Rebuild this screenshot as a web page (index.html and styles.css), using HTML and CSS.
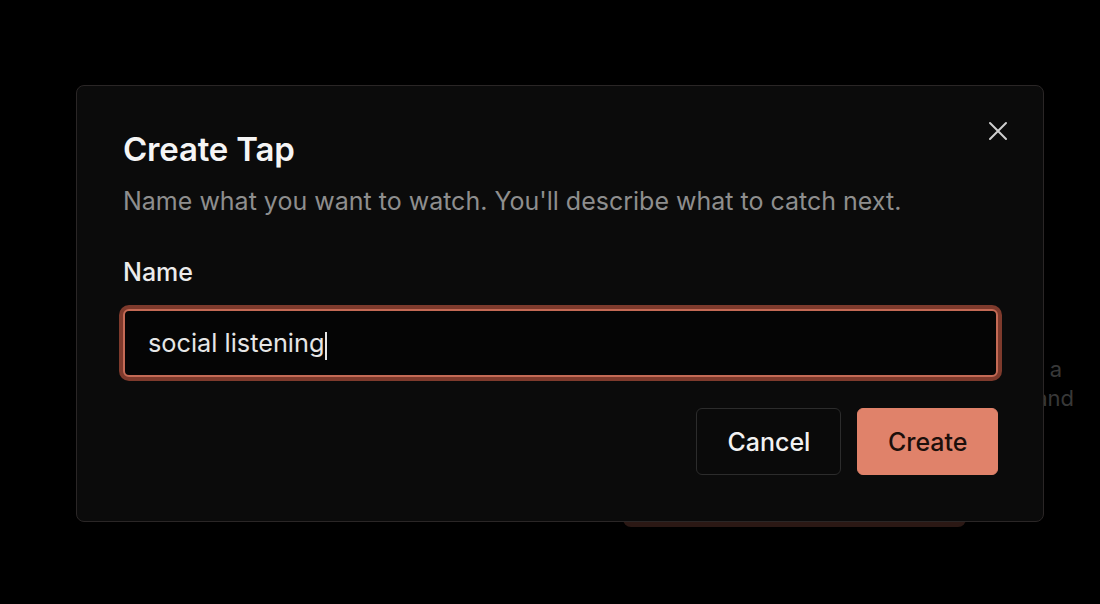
FILE: index.html
```html
<!DOCTYPE html>
<html lang="en">
<head>
<meta charset="utf-8">
<title>Create Tap</title>
<link rel="stylesheet" href="styles.css">
</head>
<body>
<div class="page">
  <div class="bg-col">
    <p class="bg-text"><span class="bg-line bg-line-1">Taps watch sources for you. Create a</span><span class="bg-line bg-line-2">tap to start listening for signals and</span></p>
    <div class="bg-btn"></div>
  </div>

  <div class="backdrop">
    <div class="modal" role="dialog" aria-labelledby="dlg-title">
      <button class="close" aria-label="Close">
        <svg viewBox="0 0 20 20" width="20" height="20" aria-hidden="true">
          <path d="M2 2 L18 18 M18 2 L2 18" stroke="#cfcfcf" stroke-width="2" stroke-linecap="round" fill="none"/>
        </svg>
      </button>
      <h2 class="title" id="dlg-title">Create Tap</h2>
      <p class="subtitle">Name what you want to watch. You'll describe what to catch next.</p>
      <label class="label">Name</label>
      <div class="field"><span class="field-text">social listening</span><span class="caret"></span></div>
      <div class="actions">
        <button class="btn btn-cancel">Cancel</button>
        <button class="btn btn-create">Create</button>
      </div>
    </div>
  </div>
</div>
</body>
</html>
```
FILE: styles.css
```css
* { box-sizing: border-box; }

html, body {
  margin: 0;
  padding: 0;
  background: #000;
}

body {
  font-family: Inter, "Noto Sans", sans-serif;
  -webkit-font-smoothing: antialiased;
}

.page {
  position: relative;
  width: 1100px;
  height: 604px;
  overflow: hidden;
  background: #000;
}

.bg-col {
  margin-left: 620px;
  width: 470px;
  padding-top: 355px;
}

.bg-text {
  margin: 0;
  color: #383838;
  font-size: 22px;
  line-height: 29px;
  white-space: nowrap;
  text-align: right;
}

.bg-line {
  display: block;
}

.bg-line-1 { padding-right: 28px; }
.bg-line-2 { padding-right: 16px; }

.bg-btn {
  margin-top: 59px;
  margin-left: 3px;
  width: 343px;
  height: 55px;
  border-radius: 8px;
  background: #2b1814;
}

.backdrop {
  position: absolute;
  inset: 0;
}

.modal {
  position: absolute;
  left: 76px;
  top: 85px;
  width: 968px;
  height: 437px;
  background: #0b0b0b;
  border: 1px solid #2a2626;
  border-radius: 8px;
  padding: 43px 45px 46px 46px;
  display: flex;
  flex-direction: column;
}

.close {
  position: absolute;
  top: 33px;
  right: 33px;
  width: 24px;
  height: 24px;
  padding: 2px;
  border: 0;
  background: transparent;
  display: flex;
  align-items: center;
  justify-content: center;
}

.title {
  margin: 0;
  color: #f5f5f5;
  font-size: 33px;
  font-weight: 600;
  line-height: 40px;
  letter-spacing: -0.2px;
}

.subtitle {
  margin: 15px 0 0;
  color: #8e8e8e;
  font-size: 25px;
  line-height: 34px;
}

.label {
  margin-top: 39px;
  color: #ececec;
  font-size: 25px;
  font-weight: 500;
  line-height: 30px;
}

.field {
  margin-top: 22px;
  height: 68px;
  background: #050505;
  border: 2px solid #c46a55;
  border-radius: 6px;
  box-shadow: 0 0 0 4px #7e3a2c;
  display: flex;
  align-items: center;
  padding-left: 23px;
}

.field-text {
  color: #e6e6e6;
  font-size: 25.3px;
  line-height: 30px;
}

.caret {
  display: inline-block;
  width: 2px;
  height: 28px;
  margin-left: 1px;
  margin-top: 6px;
  background: #e6e6e6;
}

.actions {
  margin-top: 31px;
  display: flex;
  justify-content: flex-end;
  gap: 16px;
}

.btn {
  height: 67px;
  padding: 0 30px;
  border-radius: 6px;
  font-family: inherit;
  font-size: 25px;
  font-weight: 500;
}

.btn-create {
  padding: 0 29.5px;
}

.btn-cancel {
  background: #0a0a0a;
  border: 1px solid #2c2c2c;
  color: #f2f2f2;
}

.btn-create {
  background: #e0826a;
  border: 1px solid #e0826a;
  color: #1c0f0b;
}
```
